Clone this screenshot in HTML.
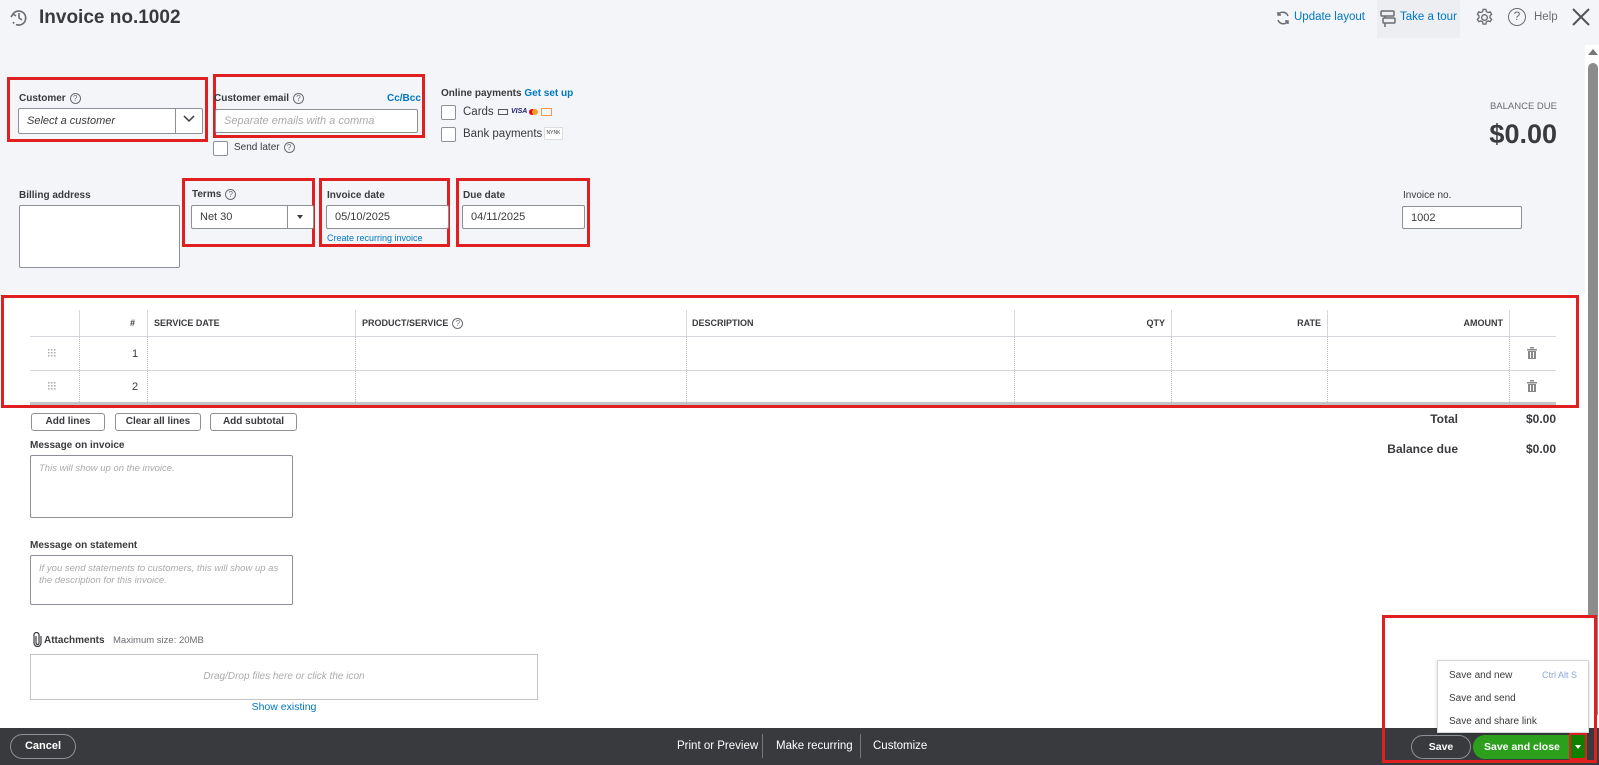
<!DOCTYPE html>
<html><head><meta charset="utf-8"><style>
*{box-sizing:border-box;margin:0;padding:0}
body{width:1599px;height:765px;overflow:hidden;background:#fff;font-family:"Liberation Sans",sans-serif;color:#393a3d;position:relative}
.a{position:absolute}
.lbl{font-size:10px;font-weight:bold;color:#393a3d}
.inp{position:absolute;background:#fff;border:1px solid #8d9096;border-radius:2px;font-size:11px;padding-left:8px;display:flex;align-items:center}
.red{position:absolute;border:3px solid #e02020}
.q{display:inline-block;width:11px;height:11px;border:1px solid #6b6c72;border-radius:50%;font-size:8px;text-align:center;line-height:9px;color:#6b6c72;font-weight:normal;vertical-align:middle;margin-left:4px}
.cb{position:absolute;width:15px;height:15px;border:1px solid #8d9096;border-radius:2px;background:#fff}
.th{position:absolute;top:318px;font-size:9px;font-weight:bold;color:#393a3d}
.vl{position:absolute;top:337px;height:67px;border-left:1px dotted #bbb}
.btn{position:absolute;border:1px solid #8d9096;border-radius:3px;font-size:10px;font-weight:bold;text-align:center;line-height:16px;background:#fff}
.blue{color:#0077c5}
</style></head><body>
<div class="a" style="left:0;top:0;width:1585px;height:294px;background:#f4f5f8"></div>
<div class="a" style="left:1585px;top:0;width:14px;height:45px;background:#f4f5f8"></div>
<!-- header -->
<svg class="a" style="left:9px;top:8px" width="20" height="20" viewBox="0 0 20 20" fill="none" stroke="#6b6c72" stroke-width="1.6"><path d="M4 6A7 7 0 1 1 7 16.5"/><path d="M10 5v5l3 2"/><path d="M2 9l2-3 3 2"/><path d="M4 14l1 1.5" stroke-dasharray="2 2"/></svg>
<div class="a" style="left:39px;top:7px;font-size:19px;font-weight:bold;color:#393a3d">Invoice no.1002</div>
<svg class="a" style="left:1275px;top:10px" width="16" height="16" viewBox="0 0 16 16" fill="none" stroke="#6b6c72" stroke-width="1.5"><path d="M13 6A5.5 5.5 0 0 0 3 5M3 2v3h3M3 10a5.5 5.5 0 0 0 10 1M13 14v-3h-3"/></svg>
<div class="a blue" style="left:1294px;top:11px;font-size:11.5px">Update layout</div>
<div class="a" style="left:1377px;top:0;width:83px;height:38px;background:#eceef1"></div>
<svg class="a" style="left:1380px;top:10px" width="16" height="18" viewBox="0 0 16 18" fill="none" stroke="#6b6c72" stroke-width="1.5"><rect x="1" y="1" width="13" height="5" rx="1"/><rect x="3" y="8" width="12" height="5" rx="1"/><path d="M5 6v2M5 13v4"/></svg>
<div class="a blue" style="left:1400px;top:11px;font-size:11.5px">Take a tour</div>
<svg class="a" style="left:1475px;top:8px" width="19" height="19" viewBox="0 0 20 20" fill="none" stroke="#6b6c72" stroke-width="1.4"><circle cx="10" cy="10" r="3"/><path d="M8.5 1.5h3l.5 2.3 1.8 1 2.2-.8 1.5 2.6-1.7 1.6v2l1.7 1.6-1.5 2.6-2.2-.8-1.8 1-.5 2.3h-3l-.5-2.3-1.8-1-2.2.8-1.5-2.6 1.7-1.6v-2L2.5 6.6 4 4l2.2.8 1.8-1z"/></svg>
<div class="a" style="left:1508px;top:8px;width:18px;height:18px;border:1.5px solid #6b6c72;border-radius:50%;font-size:12px;text-align:center;line-height:15px;color:#6b6c72">?</div>
<div class="a" style="left:1534px;top:11px;font-size:11.5px;color:#6b6c72">Help</div>
<svg class="a" style="left:1572px;top:8px" width="18" height="18" viewBox="0 0 18 18" stroke="#555" stroke-width="2"><path d="M1 1l16 16M17 1L1 17"/></svg>
<!-- scrollbar -->
<div class="a" style="left:1588px;top:49px;width:0;height:0;border-left:5px solid transparent;border-right:5px solid transparent;border-bottom:6px solid #777"></div>
<div class="a" style="left:1588px;top:63px;width:10px;height:652px;background:#8c8c8c;border-radius:5px 5px 0 0"></div>
<!-- customer -->
<div class="red" style="left:7px;top:77px;width:201px;height:65px"></div>
<div class="a lbl" style="left:19px;top:93px">Customer<span class="q">?</span></div>
<div class="inp" style="left:18px;top:108px;width:185px;height:26px;font-style:italic;color:#393a3d">Select a customer</div>
<div class="a" style="left:175px;top:109px;width:1px;height:24px;background:#8d9096"></div>
<svg class="a" style="left:182px;top:114px" width="14" height="10" viewBox="0 0 14 10" fill="none" stroke="#393a3d" stroke-width="1.5"><path d="M2 2l5 5 5-5"/></svg>
<div class="red" style="left:213px;top:74px;width:212px;height:64px"></div>
<div class="a lbl" style="left:214px;top:93px">Customer email<span class="q">?</span></div>
<div class="a blue" style="left:387px;top:93px;font-size:10px;font-weight:bold">Cc/Bcc</div>
<div class="inp" style="left:215px;top:109px;width:203px;height:24px;font-style:italic;color:#aaa">Separate emails with a comma</div>
<div class="cb" style="left:213px;top:141px"></div>
<div class="a" style="left:234px;top:142px;font-size:10px">Send later<span class="q">?</span></div>
<div class="a lbl" style="left:441px;top:88px">Online payments <span class="blue">Get set up</span></div>
<div class="cb" style="left:441px;top:105px"></div>
<div class="a" style="left:463px;top:106px;font-size:11.5px">Cards</div>
<div class="a" style="left:498px;top:109px;width:10px;height:6px;border:1px solid #555"></div>
<div class="a" style="left:511px;top:108px;font-size:7px;font-weight:bold;color:#1a1f71;font-style:italic">VISA</div>
<div class="a" style="left:529px;top:109px;width:6px;height:6px;border-radius:50%;background:#eb001b"></div>
<div class="a" style="left:532px;top:109px;width:6px;height:6px;border-radius:50%;background:#f79e1b"></div>
<div class="a" style="left:541px;top:108px;width:11px;height:8px;border:1px solid #f29a47"></div>
<div class="cb" style="left:441px;top:127px"></div>
<div class="a" style="left:463px;top:128px;font-size:11.5px">Bank payments</div>
<div class="a" style="left:544px;top:127px;width:19px;height:13px;border:1px solid #ddd;background:#fff;font-size:5px;text-align:center;line-height:11px">NYNK</div>
<div class="a" style="left:1460px;top:101px;width:97px;text-align:right;font-size:9.5px;color:#6b6c72">BALANCE DUE</div>
<div class="a" style="left:1400px;top:119px;width:157px;text-align:right;font-size:27px;font-weight:bold;color:#393a3d">$0.00</div>
<!-- billing row -->
<div class="a lbl" style="left:19px;top:190px">Billing address</div>
<div class="inp" style="left:19px;top:205px;width:161px;height:63px"></div>
<div class="red" style="left:182px;top:178px;width:133px;height:69px"></div>
<div class="a lbl" style="left:192px;top:189px">Terms<span class="q">?</span></div>
<div class="inp" style="left:191px;top:205px;width:123px;height:24px">Net 30</div>
<div class="a" style="left:287px;top:206px;width:1px;height:22px;background:#8d9096"></div>
<div class="a" style="left:297px;top:215px;border-left:3.5px solid transparent;border-right:3.5px solid transparent;border-top:4px solid #393a3d"></div>
<div class="red" style="left:319px;top:178px;width:131px;height:69px"></div>
<div class="a lbl" style="left:327px;top:190px">Invoice date</div>
<div class="inp" style="left:326px;top:205px;width:123px;height:24px">05/10/2025</div>
<div class="a blue" style="left:327px;top:233px;font-size:9px">Create recurring invoice</div>
<div class="red" style="left:456px;top:178px;width:134px;height:69px"></div>
<div class="a lbl" style="left:463px;top:190px">Due date</div>
<div class="inp" style="left:462px;top:205px;width:123px;height:24px">04/11/2025</div>
<div class="a lbl" style="left:1403px;top:190px;font-weight:normal">Invoice no.</div>
<div class="inp" style="left:1402px;top:206px;width:120px;height:23px">1002</div>
<!-- table -->
<div class="red" style="left:1px;top:295px;width:1578px;height:113px"></div>
<div class="a" style="left:30px;top:336px;width:1526px;height:1px;background:#d4d7dc"></div>
<div class="a" style="left:30px;top:370px;width:1526px;height:1px;background:#d4d7dc"></div>
<div class="a" style="left:30px;top:402px;width:1526px;height:3px;background:#c4c4c4"></div>
<div class="a" style="left:79px;top:310px;height:27px;border-left:1px solid #d4d7dc"></div>
<div class="a" style="left:147px;top:310px;height:27px;border-left:1px solid #d4d7dc"></div>
<div class="a" style="left:355px;top:310px;height:27px;border-left:1px solid #d4d7dc"></div>
<div class="a" style="left:686px;top:310px;height:27px;border-left:1px solid #d4d7dc"></div>
<div class="a" style="left:1014px;top:310px;height:27px;border-left:1px solid #d4d7dc"></div>
<div class="a" style="left:1171px;top:310px;height:27px;border-left:1px solid #d4d7dc"></div>
<div class="a" style="left:1327px;top:310px;height:27px;border-left:1px solid #d4d7dc"></div>
<div class="a" style="left:1509px;top:310px;height:27px;border-left:1px solid #d4d7dc"></div>
<div class="vl" style="left:79px"></div><div class="vl" style="left:147px"></div><div class="vl" style="left:355px"></div><div class="vl" style="left:686px"></div><div class="vl" style="left:1014px"></div><div class="vl" style="left:1171px"></div><div class="vl" style="left:1327px"></div><div class="vl" style="left:1509px"></div>
<div class="th" style="left:130px">#</div>
<div class="th" style="left:154px">SERVICE DATE</div>
<div class="th" style="left:362px">PRODUCT/SERVICE<span class="q">?</span></div>
<div class="th" style="left:692px">DESCRIPTION</div>
<div class="th" style="left:1100px;width:65px;text-align:right">QTY</div>
<div class="th" style="left:1250px;width:71px;text-align:right">RATE</div>
<div class="th" style="left:1400px;width:103px;text-align:right">AMOUNT</div>
<svg class="a" style="left:48px;top:349px" width="8" height="8" fill="#aaa"><rect x="0" y="0" width="1.5" height="1.5"/><rect x="3" y="0" width="1.5" height="1.5"/><rect x="6" y="0" width="1.5" height="1.5"/><rect x="0" y="3" width="1.5" height="1.5"/><rect x="3" y="3" width="1.5" height="1.5"/><rect x="6" y="3" width="1.5" height="1.5"/><rect x="0" y="6" width="1.5" height="1.5"/><rect x="3" y="6" width="1.5" height="1.5"/><rect x="6" y="6" width="1.5" height="1.5"/></svg>
<svg class="a" style="left:48px;top:382px" width="8" height="8" fill="#aaa"><rect x="0" y="0" width="1.5" height="1.5"/><rect x="3" y="0" width="1.5" height="1.5"/><rect x="6" y="0" width="1.5" height="1.5"/><rect x="0" y="3" width="1.5" height="1.5"/><rect x="3" y="3" width="1.5" height="1.5"/><rect x="6" y="3" width="1.5" height="1.5"/><rect x="0" y="6" width="1.5" height="1.5"/><rect x="3" y="6" width="1.5" height="1.5"/><rect x="6" y="6" width="1.5" height="1.5"/></svg>
<div class="a" style="left:132px;top:348px;font-size:11px">1</div>
<div class="a" style="left:132px;top:381px;font-size:11px">2</div>
<svg class="a" style="left:1527px;top:347px" width="10" height="12" viewBox="0 0 10 12" fill="#888"><rect x="0" y="2" width="10" height="1.5"/><rect x="3" y="0" width="4" height="1.5"/><path d="M1 4h8v8H1z M3 5v6h1V5z M6 5v6h1V5z" fill-rule="evenodd"/></svg>
<svg class="a" style="left:1527px;top:380px" width="10" height="12" viewBox="0 0 10 12" fill="#888"><rect x="0" y="2" width="10" height="1.5"/><rect x="3" y="0" width="4" height="1.5"/><path d="M1 4h8v8H1z M3 5v6h1V5z M6 5v6h1V5z" fill-rule="evenodd"/></svg>
<div class="btn" style="left:31px;top:413px;width:74px;height:18px">Add lines</div>
<div class="btn" style="left:115px;top:413px;width:86px;height:18px">Clear all lines</div>
<div class="btn" style="left:210px;top:413px;width:87px;height:18px">Add subtotal</div>
<div class="a" style="left:1380px;top:412px;width:78px;text-align:right;font-size:12px;font-weight:bold">Total</div>
<div class="a" style="left:1480px;top:412px;width:76px;text-align:right;font-size:12px;font-weight:bold">$0.00</div>
<div class="a" style="left:1360px;top:442px;width:98px;text-align:right;font-size:12px;font-weight:bold">Balance due</div>
<div class="a" style="left:1480px;top:442px;width:76px;text-align:right;font-size:12px;font-weight:bold">$0.00</div>
<div class="a lbl" style="left:30px;top:440px">Message on invoice</div>
<div class="inp" style="left:30px;top:455px;width:263px;height:63px;align-items:flex-start;padding-top:7px;font-size:9.5px;font-style:italic;color:#aaa">This will show up on the invoice.</div>
<div class="a lbl" style="left:30px;top:540px">Message on statement</div>
<div class="inp" style="left:30px;top:555px;width:263px;height:50px;align-items:flex-start;padding-top:7px;font-size:9.5px;font-style:italic;color:#aaa;line-height:12px">If you send statements to customers, this will show up as the description for this invoice.</div>
<svg class="a" style="left:33px;top:632px" width="9" height="15" viewBox="0 0 9 15" fill="none" stroke="#393a3d" stroke-width="1.2"><path d="M3 4v7a1.5 1.5 0 0 0 3 0V3a2.5 2.5 0 0 0-5 0v8a3.5 3.5 0 0 0 7 0V4"/></svg>
<div class="a lbl" style="left:44px;top:635px">Attachments</div>
<div class="a" style="left:113px;top:635px;font-size:9.5px;color:#6b6c72">Maximum size: 20MB</div>
<div class="a" style="left:30px;top:654px;width:508px;height:46px;border:1px solid #c4c4c4;font-size:10px;font-style:italic;color:#aaa;text-align:center;line-height:44px">Drag/Drop files here or click the icon</div>
<div class="a blue" style="left:30px;top:701px;width:508px;text-align:center;font-size:10.5px">Show existing</div>
<!-- bottom bar -->
<div class="a" style="left:0;top:728px;width:1599px;height:37px;background:#393a3d"></div>
<div class="a" style="left:10px;top:734px;width:66px;height:25px;border:1px solid #8d9096;border-radius:13px;color:#fff;font-size:11px;font-weight:bold;text-align:center;line-height:23px">Cancel</div>
<div class="a" style="left:677px;top:740px;color:#fff;font-size:11.5px">Print or Preview</div>
<div class="a" style="left:762px;top:734px;width:1px;height:24px;background:#777"></div>
<div class="a" style="left:776px;top:740px;color:#fff;font-size:11.5px">Make recurring</div>
<div class="a" style="left:860px;top:734px;width:1px;height:24px;background:#777"></div>
<div class="a" style="left:873px;top:740px;color:#fff;font-size:11.5px">Customize</div>
<!-- bottom right -->
<div class="a" style="left:1384px;top:616px;width:213px;height:112px;background:#fff"></div>
<div class="a" style="left:1437px;top:660px;width:152px;height:73px;background:#fff;border:1px solid #d4d7dc;box-shadow:0 1px 3px rgba(0,0,0,.2)"></div>
<div class="a" style="left:1449px;top:670px;font-size:10px">Save and new</div>
<div class="a" style="left:1542px;top:670px;font-size:9px;color:#8aa9d6">Ctrl Alt S</div>
<div class="a" style="left:1449px;top:693px;font-size:10px">Save and send</div>
<div class="a" style="left:1449px;top:716px;font-size:10px">Save and share link</div>
<div class="a" style="left:1411px;top:735px;width:60px;height:24px;border:1px solid #8d9096;border-radius:12px;color:#fff;font-size:10.5px;font-weight:bold;text-align:center;line-height:22px">Save</div>
<div class="a" style="left:1473px;top:735px;width:112px;height:24px;background:#2ca01c;border-radius:12px 0 0 12px;color:#fff;font-size:10.5px;font-weight:bold;line-height:24px;padding-left:11px">Save and close</div>
<div class="a" style="left:1569px;top:733px;width:18px;height:27px;background:#108000;border:2px solid #e02020"></div>
<div class="a" style="left:1575px;top:745px;border-left:3px solid transparent;border-right:3px solid transparent;border-top:4px solid #fff"></div>
<div class="red" style="left:1382px;top:615px;width:215px;height:148px"></div>
</body></html>
